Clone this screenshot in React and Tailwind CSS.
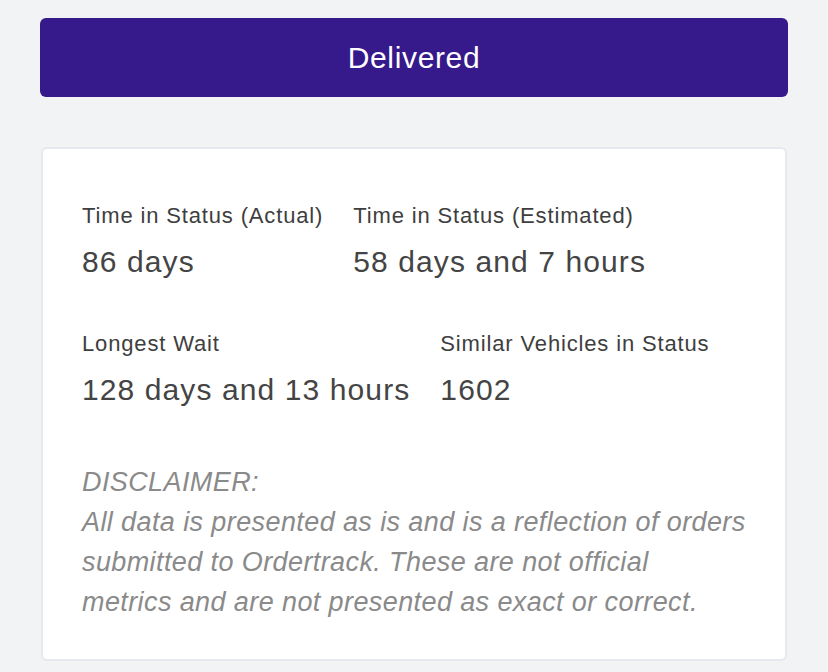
import React from 'react';

const stats = [
    [
        { label: 'Time in Status (Actual)', value: '86 days' },
        { label: 'Time in Status (Estimated)', value: '58 days and 7 hours' },
    ],
    [
        { label: 'Longest Wait', value: '128 days and 13 hours' },
        { label: 'Similar Vehicles in Status', value: '1602' },
    ],
];

const App = () => {
    return (
        <div className="min-h-screen bg-[#f2f3f5] px-10 pt-[18px] pb-10" style={{ fontFamily: '"Liberation Sans", Arial, sans-serif' }}>
            <div className="h-[79px] rounded-md bg-[#36198b] flex items-center justify-center text-white text-[30px] tracking-[0.65px]">
                Delivered
            </div>

            <div className="mt-[50px] mx-px bg-white border-2 border-[#e6e8ee] rounded-md px-[39px] pt-[53px] pb-[37px]">
                {stats.map((row, i) => (
                    <div key={i} className={`flex gap-[30px] ${i > 0 ? 'mt-[50px]' : ''}`}>
                        {row.map((s) => (
                            <div key={s.label}>
                                <div className="text-[22px] leading-[28px] tracking-[0.85px] text-[#3e3e3e]">{s.label}</div>
                                <div className="mt-[14px] text-[30px] leading-[36px] tracking-[1.1px] text-[#444444]">{s.value}</div>
                            </div>
                        ))}
                    </div>
                ))}

                <div className="mt-[54px] italic text-[27px] leading-[40px] tracking-[0.4px] text-[#8a8a8a]">
                    DISCLAIMER:
                    <br />
                    All data is presented as is and is a reflection of orders
                    <br />
                    submitted to Ordertrack. These are not official
                    <br />
                    metrics and are not presented as exact or correct.
                </div>
            </div>
        </div>
    );
};

export default App;
